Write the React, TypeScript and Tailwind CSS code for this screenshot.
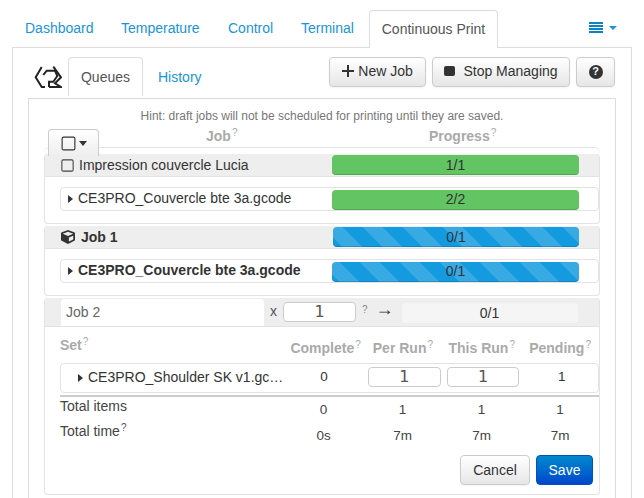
import { Square } from 'lucide-react'
import { FaCube } from 'react-icons/fa'

const font = "font-['Liberation_Sans',Arial,sans-serif]"
const stripes =
  'bg-[#149ade] bg-[linear-gradient(45deg,rgba(255,255,255,0.15)_25%,transparent_25%,transparent_50%,rgba(255,255,255,0.15)_50%,rgba(255,255,255,0.15)_75%,transparent_75%,transparent)] bg-[length:40px_40px]'

function Sup({ dark }: { dark?: boolean }) {
  return (
    <sup className={`relative -top-[5px] ml-px align-baseline text-[10px] font-normal ${dark ? 'text-[#555]' : 'text-[#aaa]'}`}>?</sup>
  )
}

function Logo() {
  return (
    <svg width="28" height="22" viewBox="0 0 28 22" fill="none" stroke="#222" strokeWidth="2" className="ml-[6px] mr-[6px] mt-[9px]">
      <path d="M7.7 1 L1.7 11.3 L7.7 21 H11" />
      <path d="M9.3 9 L12.7 4.7 H21 L23.3 10 L19.3 15.7 H15 V21" />
      <path d="M19.3 0.7 L27 11.3 L21 17.3 L27 21 H15" />
    </svg>
  )
}

function Bar({ label, striped, className }: { label: string; striped?: boolean; className?: string }) {
  return (
    <div
      className={`flex h-5 items-center justify-center rounded-[4px] text-sm text-[#333] ${
        striped ? `${stripes} shadow-[inset_0_-1px_0_rgba(0,0,0,0.15)]` : 'bg-[#62c462] shadow-[inset_0_-1px_0_rgba(0,0,0,0.15)]'
      } ${className ?? ''}`}
    >
      {label}
    </div>
  )
}

function Btn({ children, className }: { children: React.ReactNode; className?: string }) {
  return (
    <button
      className={`flex h-[30px] items-center justify-center rounded-[4px] border border-[#ccc] bg-gradient-to-b from-white to-[#e6e6e6] text-sm text-[#333] shadow-[0_1px_2px_rgba(0,0,0,0.05)] ${className ?? ''}`}
    >
      {children}
    </button>
  )
}

function Num({ className }: { className?: string }) {
  return (
    <div
      className={`flex h-5 items-center justify-center rounded-[4px] border border-[#ccc] bg-white font-['DejaVu_Sans',sans-serif] text-base text-[#555] ${className ?? ''}`}
    >
      1
    </div>
  )
}

function Job({
  icon,
  title,
  file,
  bold,
  label,
  fileLabel,
  striped,
}: {
  icon: React.ReactNode
  title: string
  file: string
  bold?: boolean
  label: string
  fileLabel: string
  striped?: boolean
}) {
  return (
    <div className="h-[70px] rounded-[4px] border-b border-x border-[#e3e3e3] bg-white">
      <div className="flex h-[23px] items-center border-b border-[#e3e3e3] bg-[#eee] pl-4 text-sm text-[#333]">
        <span className="flex w-[18px] items-center">{icon}</span>
        <span className={`w-[253px] ${bold ? 'font-bold' : ''} ${striped ? 'pl-[2px]' : ''}`}>{title}</span>
        <Bar label={label} striped={striped} className={striped ? 'ml-px w-[246px] bg-[position:-10px_0]' : 'w-[247px]'} />
      </div>
      <div className="ml-[15px] mt-[10px] flex h-[24px] items-center rounded-[4px] border border-[#e3e3e3] bg-white text-sm text-[#333]">
        <span className="ml-[7px] h-0 w-0 border-y-[4px] border-l-[5px] border-y-transparent border-l-[#333]" />
        <span className={`-mt-[2px] ml-[5px] w-[254px] ${bold ? 'font-bold' : ''}`}>{file}</span>
        <Bar label={fileLabel} striped={striped} className="mt-[2px] w-[247px] bg-[position:-12px_0] pb-[2px]" />
      </div>
    </div>
  )
}

export default function App() {
  return (
    <div className={`h-[498px] overflow-hidden bg-white text-sm text-[#333] ${font}`}>
      <nav className="flex h-[48px] items-end px-3">
        <div className="flex h-[38px] flex-1 items-center border-b border-[#ddd] pb-[2px] pl-[13px] text-[#1a94d6]">
          <span className="w-[96px]">Dashboard</span>
          <span className="w-[107px]">Temperature</span>
          <span className="w-[73px]">Control</span>
          <span className="w-[68px]">Terminal</span>
          <span className="-mb-[3px] flex h-[38px] w-[129px] items-center justify-center rounded-t-[4px] border border-b-0 border-[#ddd] bg-white pb-[2px] text-[#555]">
            Continuous Print
          </span>
          <span className="ml-auto mr-[15px] flex items-center gap-[6px]">
            <span className="flex h-[11px] w-[14px] flex-col justify-between">
              <i className="h-[2px] bg-[#0b84c6]" />
              <i className="h-[2px] bg-[#0b84c6]" />
              <i className="h-[2px] bg-[#0b84c6]" />
              <i className="h-[2px] bg-[#0b84c6]" />
            </span>
            <span className="h-0 w-0 border-x-[4px] border-t-[4px] border-x-transparent border-t-[#1a94d6]" />
          </span>
        </div>
      </nav>

      <main className="mx-3 h-[450px] border-x border-[#ddd] px-[15px]">
        <div className="flex h-[50px] items-start pt-[9px]">
          <Logo />
          <span className="flex h-[39px] w-[75px] items-center justify-center rounded-t-[4px] border border-b-0 border-[#ddd] bg-white text-[#555]">
            Queues
          </span>
          <span className="ml-[15px] mt-[10px] text-[#1a94d6]">History</span>
          <div className="ml-auto mr-[1px] flex gap-[6px]">
            <Btn className="w-[97px] gap-[4px] pb-[2px]">
              <svg width="12" height="12" viewBox="0 0 12 12" stroke="#333" strokeWidth="2">
                <path d="M6 0V12M0 6H12" />
              </svg>
              New Job
            </Btn>
            <Btn className="w-[138px] gap-[8px] pb-[2px]">
              <span className="h-[10px] w-[11px] rounded-[2px] bg-[#333]" />
              Stop Managing
            </Btn>
            <Btn className="w-[39px]">
              <span className="flex h-[14px] w-[14px] items-center justify-center rounded-full bg-[#333] text-[11px] font-bold text-white">
                ?
              </span>
            </Btn>
          </div>
        </div>

        <section className="relative h-[401px] border-x border-t border-[#ddd] pl-[15px] pr-[15px]">
          <p className="mt-[9px] h-[17px] text-center text-xs leading-[17px] text-[#777]">
            Hint: draft jobs will not be scheduled for printing until they are saved.
          </p>
          <button className="absolute left-[19px] top-[30px] z-10 flex h-[27px] w-[51px] items-center justify-center gap-[2px] rounded-t-[4px] border border-b-0 border-[#ccc] bg-gradient-to-b from-white to-[#eee]">
            <Square size={17} strokeWidth={1.6} color="#333" />
            <span className="h-0 w-0 border-x-[4px] border-t-[5px] border-x-transparent border-t-[#333]" />
          </button>
          <div className="flex h-[22px] items-center text-sm font-bold text-[#aaa]">
            <span className="ml-[162px] w-[223px]">
              Job
              <Sup />
            </span>
            <span>
              Progress
              <Sup />
            </span>
          </div>
          <div className="h-[7px] rounded-t-[6px] border-t border-[#e3e3e3]" />

          <div className="flex flex-col gap-[2px]">
            <Job
              icon={<Square size={15} strokeWidth={1.7} color="#444" className="-ml-px" />}
              title="Impression couvercle Lucia"
              file="CE3PRO_Couvercle bte 3a.gcode"
              label="1/1"
              fileLabel="2/2"
            />
            <Job
              icon={<FaCube size={14} color="#333" />}
              title="Job 1"
              file="CE3PRO_Couvercle bte 3a.gcode"
              bold
              striped
              label="0/1"
              fileLabel="0/1"
            />

            <div className="h-[197px] rounded-[4px] border-x border-b border-[#e3e3e3]">
              <div className="flex h-[29px] items-end border-b border-[#e3e3e3] bg-[#eee] pl-4">
                <div className="flex h-[27px] w-[203px] items-start rounded-t-[4px] bg-white pl-[5px] pt-[3px] text-[#666]">Job 2</div>
                <span className="mb-[5px] ml-[6px] text-[#555]">x</span>
                <Num className="mb-[4px] ml-[6px] w-[73px]" />
                <span className="mb-[9px] ml-[6px] text-[10px] text-[#888]">?</span>
                <span className="mb-[7px] ml-[8px] w-[26px] text-lg leading-5">→</span>
                <div className="mb-[3px] flex h-5 w-[176px] items-center justify-center rounded-[4px] bg-[#f5f5f5]">0/1</div>
              </div>

              <div className="flex h-[36px] items-center pl-[15px] pt-[5px] font-bold text-[#aaa]">
                <span className="-mt-[6px] w-[231px]">
                  Set
                  <Sup />
                </span>
                <span className="w-[77px] text-center">
                  Complete
                  <Sup />
                </span>
                <span className="w-[80px] text-center">
                  Per Run
                  <Sup />
                </span>
                <span className="w-[80px] text-center">
                  This Run
                  <Sup />
                </span>
                <span className="w-[79px] text-center">
                  Pending
                  <Sup />
                </span>
              </div>

              <div className="ml-[15px] flex h-[30px] items-center rounded-[4px] border border-[#e3e3e3] bg-white">
                <span className="ml-[17px] h-0 w-0 border-y-[4px] border-l-[5px] border-y-transparent border-l-[#333]" />
                <span className="-mt-[2px] ml-[5px] w-[225px] truncate pr-[27px]">CE3PRO_Shoulder SK v1.gcode</span>
                <span className="-mt-[2px] w-[24px] text-center text-[13.5px]">0</span>
                <Num className="-mt-[2px] ml-[32px] w-[73px]" />
                <Num className="-mt-[2px] ml-[6px] w-[73px]" />
                <span className="-mt-[2px] ml-[6px] w-[73px] text-center text-[13.5px]">1</span>
              </div>

              <div className="ml-[15px] mt-[2px] h-[2px] bg-[#ccc]" />

              <div className="ml-[15px] flex h-[25px] items-center text-[#444]">
                <span className="-mt-[8px] w-[230px]">Total items</span>
                <span className="w-[74px] text-center text-[13.5px]">0</span>
                <span className="ml-[3px] w-[80px] text-center text-[13.5px]">1</span>
                <span className="w-[80px] text-center text-[13.5px]">1</span>
                <span className="w-[79px] text-center text-[13.5px]">1</span>
              </div>
              <div className="ml-[15px] flex h-[27px] items-center text-[#444]">
                <span className="-mt-[9px] w-[230px]">
                  Total time
                  <Sup dark />
                </span>
                <span className="w-[74px] text-center text-[13.5px]">0s</span>
                <span className="ml-[3px] w-[80px] text-center text-[13.5px]">7m</span>
                <span className="w-[80px] text-center text-[13.5px]">7m</span>
                <span className="w-[79px] text-center text-[13.5px]">7m</span>
              </div>

              <div className="mr-[6px] mt-[6px] flex justify-end gap-[6px]">
                <Btn className="w-[70px]">Cancel</Btn>
                <button className="flex h-[30px] w-[57px] items-center justify-center rounded-[4px] border border-[#0055b3] bg-gradient-to-b from-[#0088cc] to-[#0044cc] text-sm text-white">
                  Save
                </button>
              </div>
            </div>
          </div>
        </section>
      </main>
    </div>
  )
}
